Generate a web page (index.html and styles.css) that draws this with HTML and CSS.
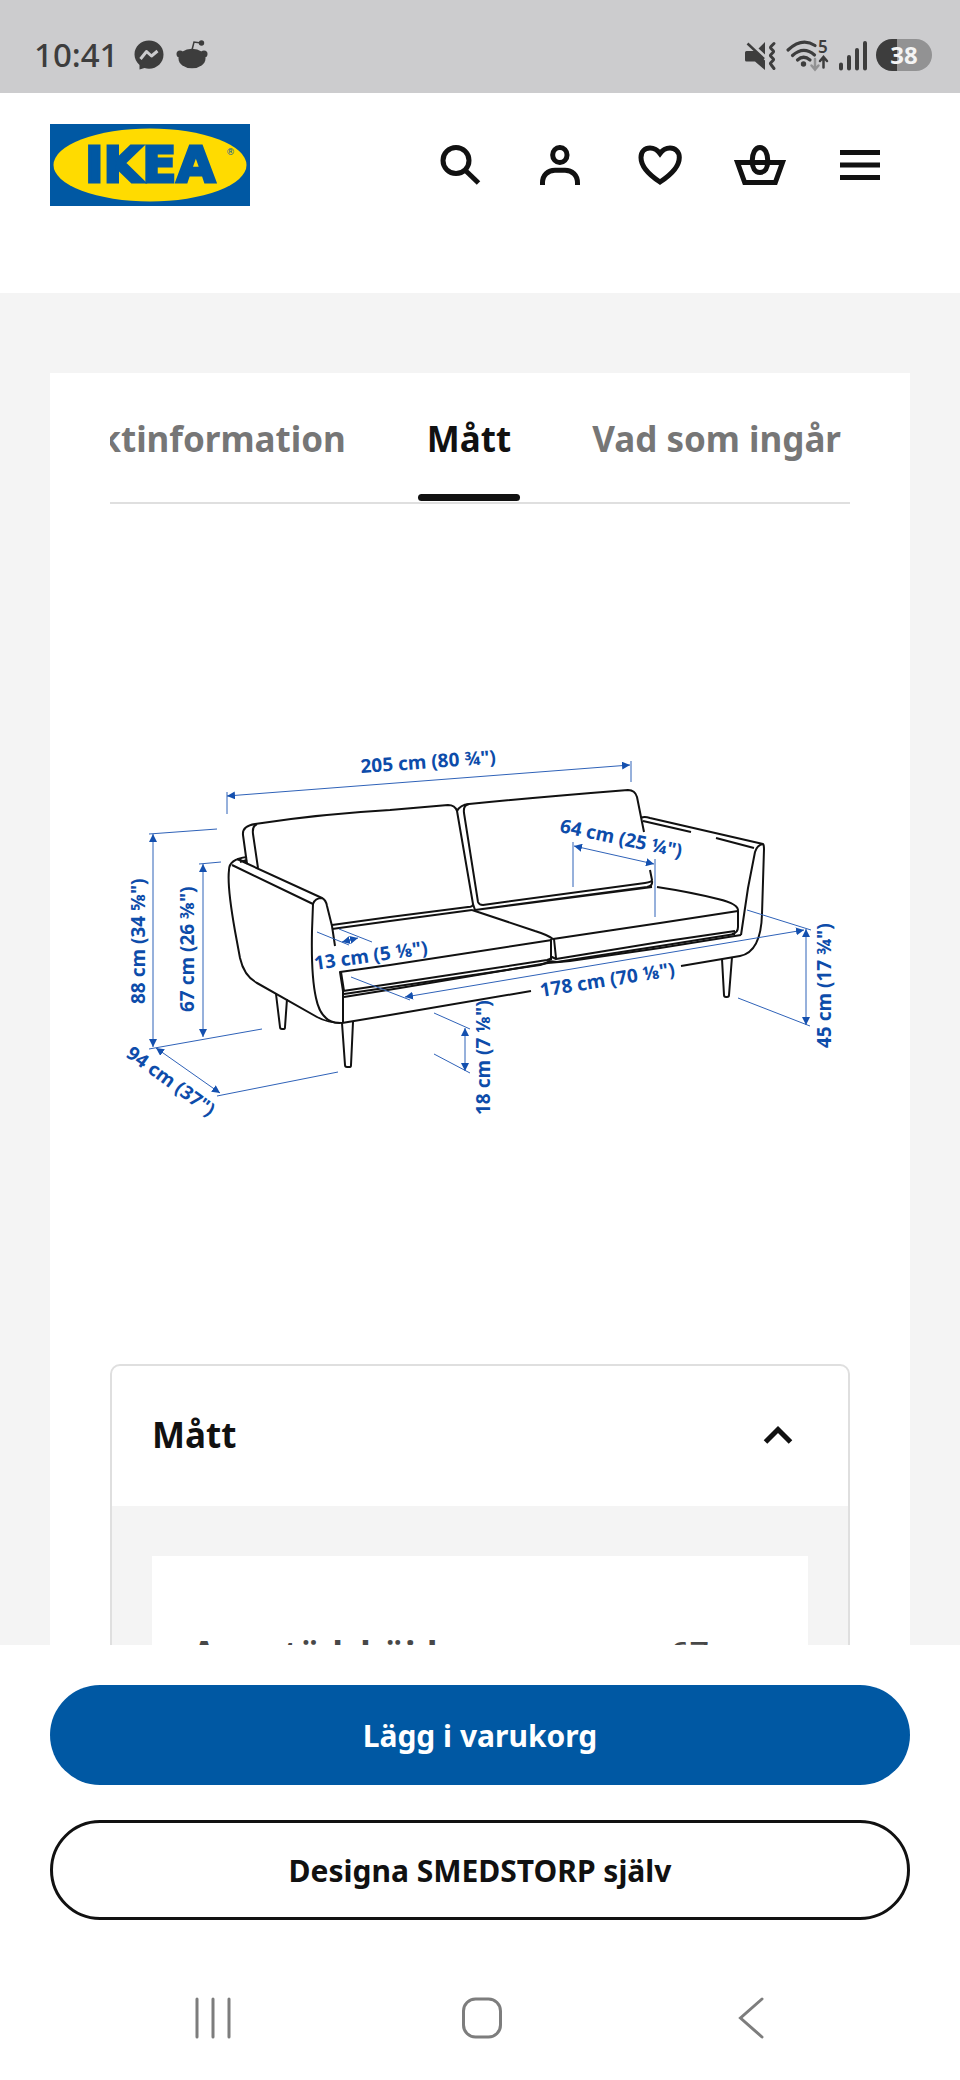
FILE: index.html
```html
<!DOCTYPE html>
<html lang="sv">
<head>
  <meta charset="UTF-8">
  <meta name="viewport" content="width=device-width, initial-scale=1.0">
  <title>SMEDSTORP - IKEA</title>
  <link rel="stylesheet" href="styles.css">
</head>
<body>
  <div class="status-bar">
    <div class="status-left">
      <span class="clock">10:41</span>
      <svg width="30" height="30" viewBox="0 0 30 30">
        <path d="M15 0.5C7 0.5 0.5 6.500 0.500 14.500c0 4 2 7.500 5 10.500v4.500l5-1.500c1.500 0.500 3 0.700 4.500 0.700c8 0 14.500-6 14.500-14.200S23 0.500 15 0.500z" fill="#3d3d3d"/>
        <path d="M6.500 19l6-7.500l5 4.500l6-5" fill="none" stroke="#ccccce" stroke-width="3" stroke-linejoin="round"/>
      </svg>
      <svg width="32" height="30" viewBox="0 0 32 30">
        <g fill="#3d3d3d">
          <circle cx="4" cy="14" r="3.500"/>
          <circle cx="28" cy="14" r="3.500"/>
          <circle cx="25.500" cy="3" r="2.700"/>
          <ellipse cx="16" cy="18.500" rx="13.500" ry="9.800"/>
        </g>
        <path d="M16 10l2-8l7 1" fill="none" stroke="#3d3d3d" stroke-width="1.500"/>
      </svg>
    </div>
    <div class="status-right">
      <svg width="34" height="32" viewBox="0 0 34 32">
        <path d="M3.500 12h8L22 21.500V31L12 22.500H3.500q-1.500 0-1.500-1.500v-7.500q0-1.500 1.500-1.500zM15.500 9.500l6.500-6.500v12.500z" fill="#3d3d3d"/>
        <path d="M4.500 4.500L21 20" stroke="#3d3d3d" stroke-width="2.500"/>
        <path d="M31 4.500l-3 3q-1 1 0 2l2 2q1 1 0 2l-2 2q-1 1 0 2l2 2q1 1 0 2l-2 2q-1 1 0 2l3 4" fill="none" stroke="#3d3d3d" stroke-width="3" stroke-linecap="round"/>
      </svg>
      <svg class="wifi" width="45" height="32" viewBox="0 0 45 32">
        <g fill="none" stroke="#3d3d3d" stroke-width="3.200" stroke-linecap="round">
          <path d="M3 11Q17-2 30 6.500"/>
          <path d="M7.500 16.500Q18.500 6.500 29.500 16"/>
          <path d="M12.500 21Q18.500 15.500 25 21"/>
          <path d="M30 20v9.500M26.500 26.500l3.500 4l3.500-4" stroke="#929293" stroke-width="2.500"/>
          <path d="M38.500 28.500V19M35 22l3.500-4l3.500 4" stroke-width="2.500"/>
        </g>
        <circle cx="18.500" cy="25" r="2.700" fill="#3d3d3d"/>
        <text x="33" y="14">5</text>
      </svg>
      <svg width="30" height="32" viewBox="0 0 30 32">
        <path d="M3 25.500v4M11 18v11.500M19 11v18.500M27 4v25.500" stroke="#3d3d3d" stroke-width="4" stroke-linecap="round"/>
      </svg>
      <span class="battery">38</span>
    </div>
  </div>

  <header class="header">
    <a class="logo" href="#" aria-label="IKEA">
      <svg width="200" height="82" viewBox="0 0 200 82">
        <rect width="200" height="82" fill="#0058a3"/>
        <ellipse cx="100" cy="41" rx="96.500" ry="36.500" fill="#ffdb00"/>
        <text class="logo-text" x="100" y="58">IKEA</text>
        <text class="logo-mark" x="176" y="31">®</text>
      </svg>
    </a>
    <nav class="header-icons">
      <button class="icon-btn" aria-label="Sök">
        <svg width="60" height="60" viewBox="0 0 60 60"><circle cx="26" cy="25.500" r="13"/><path d="M35.500 35.500L48.500 48"/></svg>
      </button>
      <button class="icon-btn" aria-label="Logga in">
        <svg width="60" height="60" viewBox="0 0 60 60"><rect x="22.700" y="12.500" width="14.300" height="15" rx="7" ry="7.300"/><path d="M12.500 50v-2C12.500 40 18 35.300 25 35.300h10C42 35.300 47.500 40 47.500 48v2"/></svg>
      </button>
      <button class="icon-btn" aria-label="Favoriter">
        <svg width="60" height="60" viewBox="0 0 60 60"><path d="M30 47C17 38.500 11 30.500 11 22.500C11 16.500 15 13 20 13c4.500 0 7.500 2 10 5.500c2.500-3.500 5.500-5.500 10-5.500c5 0 9.300 3.500 9.300 9.500C49.300 30.500 43 38.500 30 47z"/></svg>
      </button>
      <button class="icon-btn" aria-label="Varukorg">
        <svg width="60" height="60" viewBox="0 0 60 60"><path d="M7.500 27.500h45L45.300 47.500H14.700z"/><path d="M30 12.500c5 0 7.800 6 7.800 13.500c0 7-2.800 11.500-7.800 11.500s-7.800-4.500-7.800-11.500c0-7.500 2.800-13.500 7.800-13.500z"/></svg>
      </button>
      <button class="icon-btn" aria-label="Meny">
        <svg width="60" height="60" viewBox="0 0 60 60"><path d="M10 17.500h40M10 30h40M10 42.500h40"/></svg>
      </button>
    </nav>
  </header>

  <main class="content">
    <section class="card">
      <div class="tabs" role="tablist">
        <button class="tab" role="tab">Produktinformation</button>
        <button class="tab active" role="tab" aria-selected="true">Mått</button>
        <button class="tab" role="tab">Vad som ingår</button>
      </div>

      <figure class="drawing">
        <svg viewBox="110 563 740 740">
          <defs>
            <marker id="arrow" viewBox="0 0 8 8" refX="8" refY="4" markerWidth="8" markerHeight="8" markerUnits="userSpaceOnUse" orient="auto-start-reverse">
              <path d="M0 0L8 4L0 8z" fill="#1450af"/>
            </marker>
          </defs>

          <g class="sofa">
            <!-- left back cushion -->
            <path d="M247 863L243 834Q242 825 255 823Q320 813 390 809L448 804Q455 804 457 810L473 903Q473 906 468 906L390 916L332 924"/>
            <path d="M258 867L253 833Q252 825 257 823"/>
            <path d="M332 928L390 920L472 909"/>
            <!-- right back cushion -->
            <path d="M457 810Q460 804 469 803Q540 796 628 789Q635 789 637 796L644 831"/>
            <path d="M469 803Q463 804 464 812L478 901Q479 904 483 904L645 882Q652 881 652 879L650 869"/>
            <path d="M473 903L475 909L647 886Q653 885 652 880M475 909L652 886"/>
            <!-- seat cushions -->
            <path d="M657 886Q690 891 718 898Q739 903 738 910V926Q738 932 732 933"/>
            <path d="M472 909L535 930Q548 934 553 938L660 922L738 910"/>
            <path d="M552 939L390 964L340 971L343 990V1021M341 971L344 990"/>
            <path d="M551 938V959M554 938L556 957"/>
            <path d="M343 990L390 983L547 959Q551 958 552 956L556 958L660 941L735 930"/>
            <path d="M344 993L480 973L540 964Q547 962 549 960L557 961L660 945L735 933"/>
            <path d="M344 996L400 987L548 962L570 960L660 947L741 934"/>
            <!-- right arm -->
            <path d="M641 817Q644 815 650 817L763 843Q764 844 764 848L762 913Q761 951 740 955L681 965"/>
            <path d="M643 820L691 831M716 837L754 847"/>
            <path d="M741 934L748 887L755 851Q757 844 763 843"/>
            <!-- left arm -->
            <path d="M247 856Q229 858 229 869Q227 885 235 930L240 957Q244 975 257 982L317 1016Q328 1022 342 1022L390 1014L531 990"/>
            <path d="M237 858L322 897M232 864L313 903M238 858L247 862M240 861L247 859"/>
            <path d="M340 1022Q321 1022 316 997Q311 975 312 930L313 903Q315 897 322 897Q326 899 327 905L332 925L335 945"/>
            <!-- legs -->
            <path d="M276 993L280 1026Q280 1028 282 1028H284Q285 1028 285 1026L287 998"/>
            <path d="M342 1022L345 1064Q345 1066 347 1066H350Q351 1066 351 1064L353 1021"/>
            <path d="M722 958L724 994Q724 996 726 996H727Q729 996 729 994L732 956"/>
          </g>

          <g class="guides">
            <path d="M227 791V813M631 760V781"/>
            <path d="M149 833L217 828M199 863L221 861M149 1048L262 1028"/>
            <path d="M217 1095L338 1071"/>
            <path d="M317 931L349 944M339 928L372 941"/>
            <path d="M351 976L410 999"/>
            <path d="M747 909L811 929M738 997L810 1025"/>
            <path d="M434 1012L470 1028M434 1053L470 1072"/>
            <path d="M573 841V886M655 858V916"/>
          </g>
          <g class="guides arrows">
            <path d="M227 795L630 764"/>
            <path d="M153 833V1046"/>
            <path d="M203 863V1036"/>
            <path d="M156 1047L220 1092"/>
            <path d="M342 941L358 937"/>
            <path d="M405 996L804 929"/>
            <path d="M806 928V1024"/>
            <path d="M465 1027V1070"/>
            <path d="M574 845L654 863"/>
          </g>

          <g class="measures">
            <text transform="translate(361 772) rotate(-4)">205 cm (80 ¾")</text>
            <text transform="translate(145 1003) rotate(-90)">88 cm (34 ⅝")</text>
            <text transform="translate(194 1011) rotate(-90)">67 cm (26 ⅜")</text>
            <text transform="translate(125 1055) rotate(36)">94 cm (37")</text>
            <text transform="translate(315 969) rotate(-8)">13 cm (5 ⅛")</text>
            <text transform="translate(541 996) rotate(-9)">178 cm (70 ⅛")</text>
            <text transform="translate(490 1114) rotate(-90)">18 cm (7 ⅛")</text>
            <text transform="translate(831 1047) rotate(-90)">45 cm (17 ¾")</text>
            <text transform="translate(559 831) rotate(12)">64 cm (25 ¼")</text>
          </g>
        </svg>
      </figure>

      <div class="accordion">
        <button class="accordion-header" aria-expanded="true">
          <span>Mått</span>
          <svg width="60" height="60" viewBox="0 0 60 60"><path d="M17.500 38L30 25.500L42.500 38"/></svg>
        </button>
        <div class="accordion-body">
          <table class="measure-table">
            <tr>
              <th scope="row">Armstödshöjd</th>
              <td>67 cm</td>
            </tr>
          </table>
        </div>
      </div>
    </section>
  </main>

  <div class="buy-bar">
    <button class="btn btn-primary">Lägg i varukorg</button>
    <button class="btn btn-secondary">Designa SMEDSTORP själv</button>
  </div>

  <nav class="system-nav">
    <button aria-label="Senaste"><svg width="40" height="44" viewBox="0 0 40 44"><path d="M4 3v38M20 3v38M36 3v38"/></svg></button>
    <button aria-label="Hem"><svg width="44" height="44" viewBox="0 0 44 44"><rect x="3.500" y="3" width="37" height="38" rx="12"/></svg></button>
    <button aria-label="Tillbaka"><svg width="28" height="44" viewBox="0 0 28 44"><path d="M25 3L3.500 22L25 41"/></svg></button>
  </nav>
</body>
</html>
```

FILE: styles.css
```css
* {
  box-sizing: border-box;
}
body {
  margin: 0;
  height: 100vh;
  display: flex;
  flex-direction: column;
  background: #fff;
  color: #111;
  font-family: "Noto Sans", "Open Sans", sans-serif;
}
button {
  font-family: inherit;
  border: 0;
  padding: 0;
  background: none;
  color: inherit;
  cursor: pointer;
}
svg {
  display: block;
}

/* phone status bar */
.status-bar {
  flex: none;
  display: flex;
  justify-content: space-between;
  align-items: center;
  height: 93px;
  padding: 16px 28px 0 34px;
  background: #ccccce;
  color: #3d3d3d;
}
.status-left, .status-right {
  display: flex;
  align-items: center;
}
.status-left {
  gap: 12px;
}
.status-right {
  gap: 8px;
}
.clock {
  font-size: 33px;
  font-weight: 500;
  line-height: 36px;
  margin-right: 4px;
}
.wifi {
  overflow: visible;
}
.wifi text {
  font-size: 17px;
  font-weight: 600;
  fill: #3d3d3d;
}
.battery {
  width: 56px;
  height: 32px;
  line-height: 32px;
  border-radius: 16px;
  text-align: center;
  font-size: 24px;
  font-weight: 700;
  color: #f4f4f4;
  background: linear-gradient(to right, #3d3d3d 38%, #929293 38%);
}

/* header */
.header {
  flex: none;
  display: flex;
  justify-content: space-between;
  align-items: flex-start;
  height: 200px;
  padding: 31px 50px 0;
}
.logo-text {
  font-family: "DejaVu Sans", sans-serif;
  font-size: 50px;
  font-weight: 700;
  text-anchor: middle;
  fill: #0058a3;
  stroke: #0058a3;
  stroke-width: 3px;
}
.logo-mark {
  font-family: "DejaVu Sans", sans-serif;
  font-size: 9px;
  fill: #0058a3;
}
.header-icons {
  display: flex;
}
.icon-btn {
  width: 100px;
  height: 82px;
  display: flex;
  align-items: center;
  justify-content: center;
}
.icon-btn svg, .accordion-header svg {
  fill: none;
  stroke: #111;
  stroke-width: 5px;
}

/* product card */
.content {
  flex: 1;
  min-height: 0;
  overflow: hidden;
  padding: 80px 50px 0;
  background: #f4f4f4;
}
.card {
  background: #fff;
  padding: 0 60px;
}
.tabs {
  display: flex;
  justify-content: flex-end;
  gap: 63px;
  height: 131px;
  overflow: hidden;
  border-bottom: 2px solid #dfdfdf;
}
.tab {
  position: relative;
  flex: none;
  padding: 2px 9px 0;
  font-size: 35px;
  font-weight: 700;
  color: #767676;
  white-space: nowrap;
}
.tab.active {
  color: #111;
}
.tab.active::after {
  content: "";
  position: absolute;
  left: 0;
  right: 0;
  bottom: 1px;
  height: 7px;
  border-radius: 4px;
  background: #111;
}
.drawing {
  margin: 60px 0;
}
.drawing svg {
  width: 100%;
}
.sofa {
  fill: none;
  stroke: #111;
  stroke-width: 2px;
  stroke-linejoin: round;
}
.guides {
  fill: none;
  stroke: #2f62b8;
  stroke-width: 1px;
}
.arrows path {
  marker-start: url(#arrow);
  marker-end: url(#arrow);
}
.measures text {
  font-size: 19px;
  font-weight: 700;
  fill: #0d4caa;
}

/* accordion */
.accordion {
  border: 2px solid #dfdfdf;
  border-radius: 10px;
  overflow: hidden;
}
.accordion-header {
  width: 100%;
  height: 140px;
  display: flex;
  justify-content: space-between;
  align-items: center;
  padding: 0 40px 4px;
  font-size: 35px;
  font-weight: 700;
}
.accordion-body {
  background: #f4f4f4;
  padding: 50px 40px;
}
.measure-table {
  width: 100%;
  padding: 74px 40px;
  background: #fff;
  border-spacing: 0;
  color: #484848;
  font-size: 35px;
  line-height: 48px;
  white-space: nowrap;
}
.measure-table th {
  padding: 0;
  text-align: left;
  font-weight: 700;
}
.measure-table td {
  width: 96px;
  padding: 0;
}

/* buy buttons */
.buy-bar {
  flex: none;
  display: flex;
  flex-direction: column;
  gap: 35px;
  padding: 40px 50px 36px;
}
.btn {
  height: 100px;
  border-radius: 50px;
  font-size: 30px;
  font-weight: 700;
}
.btn-primary {
  background: #0058a3;
  color: #fff;
}
.btn-secondary {
  border: 3px solid #111;
}

/* android navigation */
.system-nav {
  flex: none;
  display: flex;
  height: 124px;
  padding: 0 75px 0 79px;
}
.system-nav button {
  flex: 1;
  display: flex;
  align-items: center;
  justify-content: center;
}
.system-nav svg {
  fill: none;
  stroke: #7d7d7d;
  stroke-width: 3px;
  stroke-linecap: round;
}
```
